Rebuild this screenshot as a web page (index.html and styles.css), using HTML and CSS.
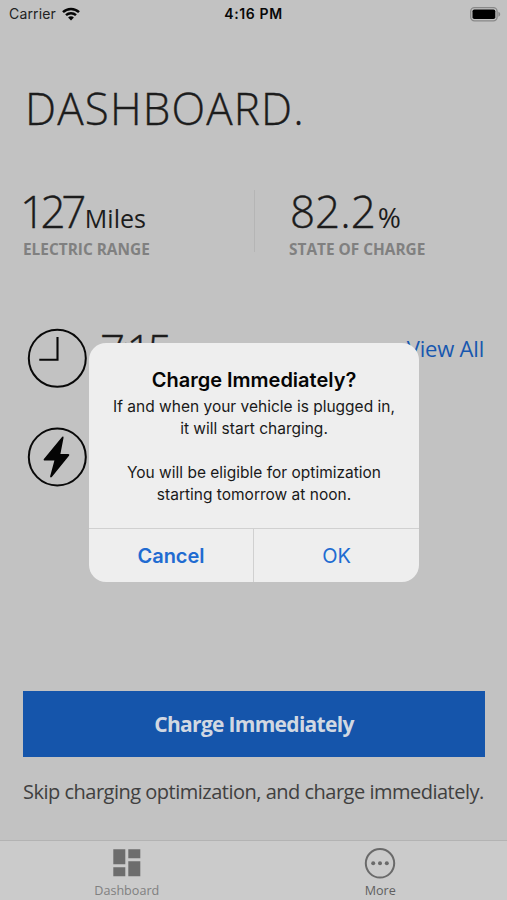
FILE: index.html
```html
<!DOCTYPE html>
<html lang="en">
<head>
<meta charset="utf-8">
<title>Dashboard</title>
<link rel="stylesheet" href="styles.css">
</head>
<body>
<div class="phone">
  <header class="status">
    <div class="carrier"><span>Carrier</span>
      <svg width="18" height="14" viewBox="0 0 18 14" fill="none" stroke="#060606" stroke-width="2.5"><path d="M1 5.1C5.4.8 12.6.8 17 5.1M4 8.2c2.8-2.6 7.2-2.6 10 0"/><path d="M6.1 10.4c1.6-1.5 4.2-1.5 5.8 0L9 13.4z" fill="#060606" stroke="none"/></svg>
    </div>
    <time class="time">4:16 PM</time>
    <svg class="battery" width="31" height="15" viewBox="0 0 31 15"><rect x=".7" y=".7" width="26.4" height="13.2" rx="3.8" fill="none" stroke="#888" stroke-width="1.3"/><rect x="2.5" y="2.5" width="22.8" height="9.6" rx="1.8"/><path d="M28.4 4.8c2.4.7 2.4 4.3 0 5z" fill="#888"/></svg>
  </header>
  <main class="content">
    <h1 class="title">DASHBOARD.</h1>
    <section class="stats">
      <div class="stat range">
        <div class="value"><span class="num tight">127</span><span class="unit">Miles</span></div>
        <div class="label">ELECTRIC RANGE</div>
      </div>
      <div class="stat soc">
        <div class="value"><span class="num">82.2</span><span class="unit percent">%</span></div>
        <div class="label">STATE OF CHARGE</div>
      </div>
    </section>
    <section class="rows">
      <div class="row">
        <svg width="60" height="60" viewBox="0 0 60 60" fill="none" stroke="#090909" stroke-width="2"><circle cx="30.3" cy="30.3" r="28.5"/><path d="M30.5 9v22.8H12.3" stroke-width="2.1"/></svg>
        <span class="clock">7:15</span>
        <a class="all">View All</a>
      </div>
      <div class="row">
        <svg width="60" height="60" viewBox="0 0 60 60"><circle cx="30.3" cy="30" r="28.5" fill="none" stroke="#090909" stroke-width="2"/><path d="M34.8 10.2c.8-1.2 2-.7 1.7.7L33.4 27h7.8c1 0 1.5.8.8 1.7L25 49.8c-1 1.2-2.2.7-1.8-.8l4.2-15.4h-9.7c-1 0-1.4-.8-.8-1.6z" fill="#040404"/></svg>
      </div>
    </section>
    <button class="charge"><span>Charge Immediately</span></button>
    <p class="note">Skip charging optimization, and charge immediately.</p>
  </main>
  <nav class="tabs">
    <div class="tab">
      <svg width="32" height="32" viewBox="0 0 32 32" fill="#6d6d6d"><path d="M2.3 2.3h12v15h-12zM17.3 2.3h12v9h-12zM2.3 20.3h12v9h-12zM17.3 14.3h12v15h-12z"/></svg>
      <span class="dash">Dashboard</span>
    </div>
    <div class="tab more">
      <svg width="32" height="32" viewBox="0 0 32 32" fill="#6a6a6a"><circle cx="16" cy="16.3" r="14.2" fill="none" stroke="#6a6a6a" stroke-width="2"/><circle cx="9.2" cy="16.3" r="2"/><circle cx="16" cy="16.3" r="2"/><circle cx="22.8" cy="16.3" r="2"/></svg>
      <span>More</span>
    </div>
  </nav>
  <div class="dialog" role="alertdialog">
    <div class="message">
      <h2>Charge Immediately?</h2>
      <p class="l1">If and when your vehicle is plugged in,<br>it will start charging.</p>
      <p class="l2">You will be eligible for optimization<br>starting tomorrow at noon.</p>
    </div>
    <div class="actions">
      <button class="cancel">Cancel</button>
      <button class="ok">OK</button>
    </div>
  </div>
</div>
</body>
</html>
```

FILE: styles.css
```css
* { box-sizing: border-box; margin: 0; padding: 0; }
body { background: #c2c2c2; }
button { border: 0; background: none; font: inherit; }
svg { display: block; flex: none; }
.phone {
  position: relative; width: 507px; height: 900px; overflow: hidden;
  display: flex; flex-direction: column;
  background: #c2c2c2; color: #1c1c1c; font-family: "Open Sans", sans-serif; white-space: nowrap;
}
.status {
  height: 28px; padding: 0 6px 0 9px; display: grid; grid-template-columns: 1fr auto 1fr;
  align-items: center; font: 500 14px/28px Inter, sans-serif; color: #111;
}
.carrier { display: flex; align-items: center; gap: 6px; font-weight: 400; color: #222; letter-spacing: .15px; padding-bottom: 2px; }
.time { font-weight: 600; letter-spacing: .6px; color: #080808; margin: -2px 0 0 -3px; }
.battery { justify-self: end; margin-top: -2px; }
.content { flex: 1; padding: 0 22px 0 23px; }
.title { margin-top: 50px; padding-left: 2px; font-size: 44px; line-height: 60px; font-weight: 300; letter-spacing: 1.15px; -webkit-text-stroke: .35px #1c1c1c; }
.stats { margin-top: 52px; height: 62px; display: grid; grid-template-columns: 232px 1fr; grid-template-rows: 62px; }
.range { border-right: 1px solid #b5b5b5; }
.soc { padding-left: 35px; }
.value { height: 49px; line-height: 44px; margin-top: -1px; margin-bottom: 2px; }
.num { font-size: 44px; font-weight: 300; -webkit-text-stroke: .35px #1c1c1c; }
.tight { margin-left: -3px; letter-spacing: -4.5px; padding-right: 3px; }
.unit { font-size: 25px; font-weight: 500; }
.percent { font-size: 28px; margin-left: 2px; }
.label { font-size: 15.4px; line-height: 20px; font-weight: 700; color: #808080; }
.soc .label { margin-left: -1px; }
.rows { margin-top: 76px; padding-left: 4px; display: grid; gap: 39px; }
.row { height: 60px; display: flex; }
.clock { margin-left: 13px; font-size: 44px; line-height: 44px; font-weight: 300; letter-spacing: -4.5px; -webkit-text-stroke: .35px #1c1c1c; }
.all { margin-left: auto; font-size: 22px; line-height: 40px; color: #1757af; letter-spacing: -.2px; padding-right: 1px; }
.charge { display: block; width: 462px; height: 66px; margin-top: 204px; background: #1555ab; color: #d1d8e2; font-size: 21px; font-weight: 700; letter-spacing: -.7px; }
.note { margin-top: 20px; font-size: 20px; line-height: 30px; color: #404040; letter-spacing: -.5px; }
.tabs { height: 60px; border-top: 1px solid #b3b3b3; background: #cbcbcb; display: grid; grid-template-columns: 1fr 1fr; }
.tab { display: flex; flex-direction: column; align-items: center; padding-top: 6px; font-size: 12.6px; line-height: 16px; font-weight: 500; color: #808080; }
.tab span { margin-top: 4px; }
.more { color: #606060; }
.dialog {
  position: absolute; left: 89px; top: 343px; width: 330px; height: 239px; border-radius: 17px;
  background: #eee; color: #191919; display: flex; flex-direction: column; overflow: hidden;
  font-family: Inter, sans-serif; text-align: center;
}
.message { height: 185px; padding-top: 24px; font-size: 15.5px; line-height: 22px; }
.message h2 { font-size: 20px; line-height: 26px; font-weight: 600; color: #050505; }
.message p { margin-top: 3px; }
.message .l2 { margin-top: 22px; }
.actions { flex: 1; display: grid; grid-template-columns: 1fr 1fr; border-top: 1px solid #d0d0d0; font-size: 20px; color: #206bd1; }
.actions button { color: inherit; }
.actions .cancel { border-right: 1px solid #d0d0d0; font-weight: 600; }
```
